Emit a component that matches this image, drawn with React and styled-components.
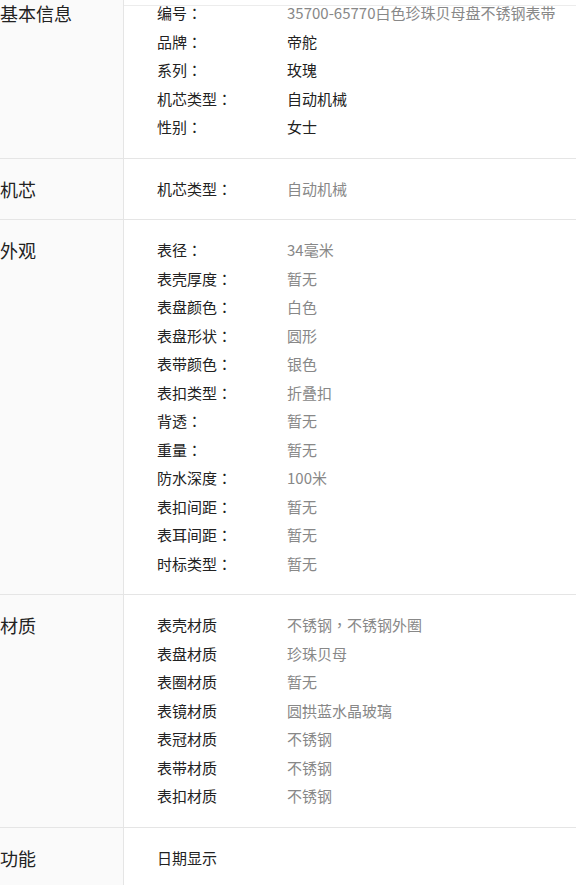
import React from "react";
import styled, { createGlobalStyle } from "styled-components";

const sections = [
  {
    title: "基本信息",
    first: true,
    rows: [
      { label: "编号：", value: "35700-65770白色珍珠贝母盘不锈钢表带", muted: true },
      { label: "品牌：", value: "帝舵" },
      { label: "系列：", value: "玫瑰" },
      { label: "机芯类型：", value: "自动机械" },
      { label: "性别：", value: "女士" },
    ],
  },
  {
    title: "机芯",
    rows: [{ label: "机芯类型：", value: "自动机械", muted: true }],
  },
  {
    title: "外观",
    rows: [
      ["表径：", "34毫米"],
      ["表壳厚度：", "暂无"],
      ["表盘颜色：", "白色"],
      ["表盘形状：", "圆形"],
      ["表带颜色：", "银色"],
      ["表扣类型：", "折叠扣"],
      ["背透：", "暂无"],
      ["重量：", "暂无"],
      ["防水深度：", "100米"],
      ["表扣间距：", "暂无"],
      ["表耳间距：", "暂无"],
      ["时标类型：", "暂无"],
    ].map(([label, value]) => ({ label, value, muted: true })),
  },
  {
    title: "材质",
    rows: [
      ["表壳材质", "不锈钢，不锈钢外圈"],
      ["表盘材质", "珍珠贝母"],
      ["表圈材质", "暂无"],
      ["表镜材质", "圆拱蓝水晶玻璃"],
      ["表冠材质", "不锈钢"],
      ["表带材质", "不锈钢"],
      ["表扣材质", "不锈钢"],
    ].map(([label, value]) => ({ label, value, muted: true })),
  },
  {
    title: "功能",
    rows: [{ label: "日期显示" }],
  },
];

// full-width punctuation centred in its cell, as the original font draws it
const withPunct = (text) =>
  text
    .split(/([：，])/)
    .map((part, i) =>
      part === "：" || part === "，" ? <Punct key={i}>{part}</Punct> : part
    );

const App = () => (
  <>
    <GlobalStyle />
    <Table>
      {sections.map((section) => (
        <Section key={section.title}>
          <Heading $first={section.first}>{section.title}</Heading>
          <Body $first={section.first}>
            {section.rows.map((row) => (
              <Row key={row.label}>
                <Label>{withPunct(row.label)}</Label>
                {row.value && (
                  <Value $muted={row.muted}>{withPunct(row.value)}</Value>
                )}
              </Row>
            ))}
          </Body>
        </Section>
      ))}
    </Table>
  </>
);

export default App;

const GlobalStyle = createGlobalStyle`
  html, body {
    margin: 0;
    padding: 0;
    background: #fff;
    overflow: hidden;
  }
  body {
    font-family: "Microsoft YaHei", "Noto Sans CJK SC", "Noto Sans", sans-serif;
    color: #333;
  }
`;

const Table = styled.div`
  width: 576px;
  margin-top: 5px;
  border-top: 1px solid #ececec;
`;

const Section = styled.div`
  display: grid;
  grid-template-columns: 124px 1fr;
  border-bottom: 1px solid #e5e5e5;
`;

const Heading = styled.div`
  background: #fafafa;
  border-right: 1px solid #e5e5e5;
  padding: ${(p) => (p.$first ? "0" : "16px")} 0 16px 0;
  margin-top: ${(p) => (p.$first ? "-7px" : "0")};
  font-size: 18px;
  line-height: 28.5px;
  color: #222;
`;

const Body = styled.div`
  padding: ${(p) => (p.$first ? "0" : "16px")} 0 16px 33px;
  margin-top: ${(p) => (p.$first ? "-7px" : "0")};
`;

const Row = styled.div`
  display: flex;
  font-size: 15px;
  line-height: 28.5px;
  white-space: nowrap;
`;

const Label = styled.span`
  width: 130px;
  flex-shrink: 0;
  color: #222;
`;

const Value = styled.span`
  color: ${(p) => (p.$muted ? "#888" : "#222")};
`;

const Punct = styled.span`
  font-family: "Noto Sans CJK TC", "Noto Sans CJK SC", sans-serif;
`;
